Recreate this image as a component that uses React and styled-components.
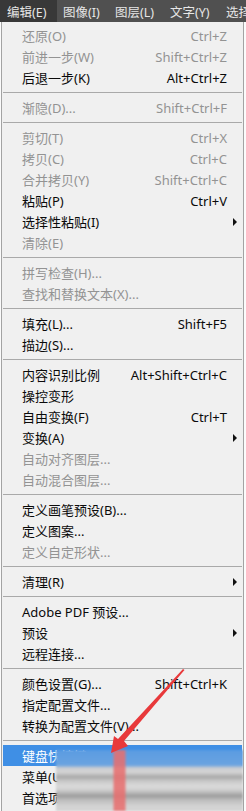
import React from 'react';
import styled, { createGlobalStyle } from 'styled-components';

const GlobalStyle = createGlobalStyle`
  body {
    margin: 0;
    background: #fbfbfb;
    font-family: "Noto Sans", "Noto Sans CJK SC", sans-serif;
  }
`;

// bar titles with the width each one takes in the bar
const menuTitles = [
  { label: '编辑(E)', width: 57, lead: 7, open: true },
  { label: '图像(I)', width: 52, lead: 6 },
  { label: '图层(L)', width: 55, lead: 6 },
  { label: '文字(Y)', width: 56, lead: 6 },
  { label: '选择', width: 40, lead: 6 },
];

const sections = [
  [
    { label: '还原(O)', shortcut: 'Ctrl+Z', disabled: true },
    { label: '前进一步(W)', shortcut: 'Shift+Ctrl+Z', disabled: true },
    { label: '后退一步(K)', shortcut: 'Alt+Ctrl+Z' },
  ],
  [{ label: '渐隐(D)...', shortcut: 'Shift+Ctrl+F', disabled: true }],
  [
    { label: '剪切(T)', shortcut: 'Ctrl+X', disabled: true },
    { label: '拷贝(C)', shortcut: 'Ctrl+C', disabled: true },
    { label: '合并拷贝(Y)', shortcut: 'Shift+Ctrl+C', disabled: true },
    { label: '粘贴(P)', shortcut: 'Ctrl+V' },
    { label: '选择性粘贴(I)', sub: true },
    { label: '清除(E)', disabled: true },
  ],
  [
    { label: '拼写检查(H)...', disabled: true },
    { label: '查找和替换文本(X)...', disabled: true },
  ],
  [
    { label: '填充(L)...', shortcut: 'Shift+F5' },
    { label: '描边(S)...' },
  ],
  [
    { label: '内容识别比例', shortcut: 'Alt+Shift+Ctrl+C' },
    { label: '操控变形' },
    { label: '自由变换(F)', shortcut: 'Ctrl+T' },
    { label: '变换(A)', sub: true },
    { label: '自动对齐图层...', disabled: true },
    { label: '自动混合图层...', disabled: true },
  ],
  [
    { label: '定义画笔预设(B)...' },
    { label: '定义图案...' },
    { label: '定义自定形状...', disabled: true },
  ],
  [{ label: '清理(R)', sub: true }],
  [
    { label: 'Adobe PDF 预设...' },
    { label: '预设', sub: true },
    { label: '远程连接...' },
  ],
  [
    { label: '颜色设置(G)...', shortcut: 'Shift+Ctrl+K' },
    { label: '指定配置文件...' },
    { label: '转换为配置文件(V)...' },
  ],
  [
    { label: '键盘快捷键...', active: true },
    { label: '菜单(U)...' },
    { label: '首选项' },
  ],
];

const App = () => (
  <>
    <GlobalStyle />
    <MenuBar>
      {menuTitles.map((t) => (
        <MenuTitle key={t.label} open={t.open} $w={t.width} $lead={t.lead}>
          {t.label}
        </MenuTitle>
      ))}
    </MenuBar>
    <Panel>
      {sections.map((items, si) => (
        <React.Fragment key={si}>
          {si > 0 && <Separator />}
          {items.map((item) => (
            <Row key={item.label} disabled={item.disabled} active={item.active}>
              <Label>{item.label}</Label>
              <Shortcut>{item.shortcut}</Shortcut>
              <Tail>{item.sub && <SubArrow />}</Tail>
            </Row>
          ))}
        </React.Fragment>
      ))}
      <Blur />
      <Pointer viewBox="0 0 246 811" width="246" height="811">
        <path d="M183 669 L184.5 670 L124 741 L128 746 L111 753 L114 736 L118 739 Z" fill="#e8393b" />
      </Pointer>
    </Panel>
  </>
);

const MenuBar = styled.div`
  display: flex;
  height: 22px;
  background: #505050;
  color: #e6e6e6;
  font-size: 12.5px;
  overflow: hidden;
  white-space: nowrap;
`;

const MenuTitle = styled.div`
  display: flex;
  align-items: center;
  flex-shrink: 0;
  box-sizing: border-box;
  width: ${(p) => p.$w}px;
  padding-left: ${(p) => p.$lead}px;
  background: ${(p) => (p.open ? '#383838' : 'transparent')};
`;

const Panel = styled.div`
  position: relative;
  margin-left: 1px;
  width: 241px;
  padding-top: 3px;
  height: 786px;
  background: #f0f0f0;
  border-left: 1px solid #a3a3a3;
  border-right: 1px solid #a3a3a3;
  overflow: hidden;
`;

const Row = styled.div`
  display: flex;
  align-items: center;
  height: 21px;
  margin: 0 1px;
  padding-left: 19px;
  font-size: 13px;
  white-space: nowrap;
  color: ${(p) => (p.active ? '#ffffff' : p.disabled ? '#939393' : '#0a0a0a')};
  background: ${(p) => (p.active ? '#3f8fe5' : 'transparent')};
`;

const Label = styled.span`
  flex: 1;
`;

const Shortcut = styled.span``;

const Tail = styled.span`
  display: flex;
  align-items: center;
  width: 15px;
  padding-left: 6px;
  box-sizing: border-box;
`;

const SubArrow = styled.span`
  width: 0;
  height: 0;
  border-top: 4px solid transparent;
  border-bottom: 4px solid transparent;
  border-left: 4px solid #111;
`;

const Separator = styled.div`
  height: 9px;
  margin: 0 1px;
  display: flex;
  align-items: center;

  &::before {
    content: '';
    flex: 1;
    height: 1px;
    margin-top: -1px;
    background: #a9a9a9;
  }
`;

const Blur = styled.div`
  position: absolute;
  left: 54px;
  top: 728px;
  right: 0;
  bottom: 0;
  background:
    linear-gradient(90deg, rgba(0,0,0,0) 0, rgba(0,0,0,0) 57px, rgba(232,110,110,0.85) 58px, rgba(232,110,110,0.85) 69px, rgba(0,0,0,0) 70px),
    linear-gradient(180deg,
      #5b9ce2 0, #6aa3e0 15px,
      #c9ccd0 18px, #d6d6d6 22px, #a9a9a9 27px, #c8c8c8 31px, #dadada 36px,
      #cfcfcf 40px, #9d9d9d 46px, #bdbdbd 50px, #d3d3d3 56px);
  filter: blur(1px);
`;

const Pointer = styled.svg`
  position: absolute;
  left: -2px;
  top: -22px;
  pointer-events: none;
`;

export default App;
